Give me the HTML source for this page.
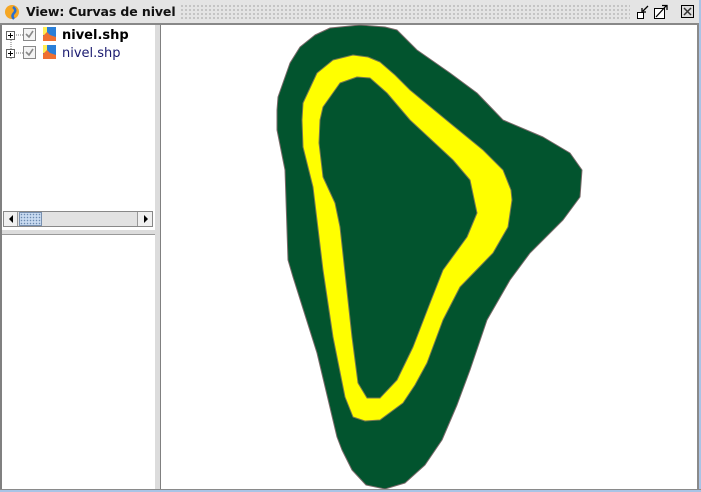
<!DOCTYPE html>
<html><head><meta charset="utf-8"><style>
*{margin:0;padding:0;box-sizing:border-box}
body{width:701px;height:492px;position:relative;overflow:hidden;background:#fff;font-family:"Liberation Sans","DejaVu Sans",sans-serif}
.abs{position:absolute}
</style></head><body>
<div class="abs" style="left:0;top:0;width:701px;height:22px;background-color:#e4e4e4;background-image:radial-gradient(#9a9a9a 0.6px,transparent 0.9px);background-size:4px 4px;"></div>
<div class="abs" style="left:0;top:0;width:701px;height:3px;background:#e4e4e4"></div>
<div class="abs" style="left:0;top:20px;width:701px;height:3px;background:#e4e4e4"></div>
<div class="abs" style="left:0;top:23px;width:701px;height:2px;background:#888"></div>
<div class="abs" style="left:0;top:2px;width:179px;height:20px;background:#e4e4e4"></div>
<svg class="abs" style="left:4px;top:4px" width="16" height="16"><circle cx="8" cy="8" r="7" fill="#f5a623"/><path d="M9 3 Q13 6 10 9 Q7 12 10 15" stroke="#2a6fd0" stroke-width="2.5" fill="none"/></svg>
<div class="abs" style="left:26px;top:4px;font-size:12.5px;font-weight:bold;color:#111;font-family:'DejaVu Sans',sans-serif;letter-spacing:-0.1px">View: Curvas de nivel</div>
<div class="abs" style="left:630px;top:2px;width:71px;height:20px;background:#e4e4e4"></div>
<svg class="abs" style="left:636px;top:4px" width="60" height="16">
<rect x="1.5" y="8.5" width="6" height="6" fill="#fff" stroke="#000"/><path d="M12 2 L7 7 M6 4 V8 H10" stroke="#000" fill="none" stroke-width="1.3"/>
<rect x="18.5" y="4.5" width="10" height="10" fill="#fff" stroke="#000"/><path d="M20 13 L30 2 M26 1.5 H31 V6" stroke="#000" fill="none" stroke-width="1.3"/>
<rect x="45.5" y="1.5" width="12" height="12" fill="#ddd" stroke="#000"/><path d="M48 4 L55 11 M55 4 L48 11" stroke="#333" stroke-width="1.5"/>
</svg>
<div class="abs" style="left:0;top:25px;width:2px;height:465px;background:#808080"></div>
<div class="abs" style="left:155px;top:25px;width:5px;height:465px;background:#dcdcdc"></div>
<div class="abs" style="left:160px;top:25px;width:1px;height:465px;background:#808080"></div>
<svg class="abs" style="left:4px;top:27px" width="60" height="36">
<path d="M7 9 V33 M12 8 H21 M12 26 H21" stroke="#777" stroke-dasharray="1 1" fill="none"/>
<rect x="2.5" y="4.5" width="8" height="8" fill="#fff" stroke="#666"/><path d="M4 8.5 H9 M6.5 6 V11" stroke="#000"/>
<rect x="2.5" y="22.5" width="8" height="8" fill="#fff" stroke="#666"/><path d="M4 26.5 H9 M6.5 24 V29" stroke="#000"/>
<rect x="19.5" y="1.5" width="12" height="12" fill="#f4f4f4" stroke="#888"/><path d="M22 7 L25 10 L29 4" stroke="#888" stroke-width="1.6" fill="none"/>
<rect x="19.5" y="19.5" width="12" height="12" fill="#f4f4f4" stroke="#888"/><path d="M22 25 L25 28 L29 22" stroke="#888" stroke-width="1.6" fill="none"/>
<rect x="39" y="0" width="13" height="14" fill="#2a7fd8"/><rect x="39" y="0" width="4" height="8" fill="#ffee55"/><path d="M39 14 V9 L43 5 L46 8 L52 10 V14Z" fill="#f07030"/>
<rect x="39" y="18" width="13" height="14" fill="#2a7fd8"/><rect x="39" y="18" width="4" height="8" fill="#ffee55"/><path d="M39 32 V27 L43 23 L46 26 L52 28 V32Z" fill="#f07030"/>
</svg>
<div class="abs" style="left:62px;top:28px;font-size:13px;font-weight:bold;color:#000;font-family:'DejaVu Sans',sans-serif">nivel.shp</div>
<div class="abs" style="left:62px;top:46px;font-size:13px;color:#1a1a70;font-family:'DejaVu Sans',sans-serif">nivel.shp</div>
<div class="abs" style="left:3px;top:211px;width:150px;height:16px;background:#e2e2e2;border:1px solid #888"></div>
<div class="abs" style="left:4px;top:212px;width:14px;height:14px;background:#f0f0f0;border-right:1px solid #999"></div>
<svg class="abs" style="left:7px;top:214px" width="8" height="10"><path d="M6 1 L2 5 L6 9Z" fill="#000"/></svg>
<div class="abs" style="left:19px;top:212px;width:23px;height:14px;background-color:#c8daf0;background-image:radial-gradient(#6a8ab0 0.6px,transparent 0.9px);background-size:3px 3px;border:1px solid #7890b0"></div>
<div class="abs" style="left:137px;top:212px;width:15px;height:14px;background:#f0f0f0;border-left:1px solid #999"></div>
<svg class="abs" style="left:142px;top:214px" width="8" height="10"><path d="M2 1 L6 5 L2 9Z" fill="#000"/></svg>
<div class="abs" style="left:2px;top:230px;width:153px;height:5px;background:#dcdcdc;border-bottom:1px solid #999"></div>
<div class="abs" style="left:697px;top:23px;width:2px;height:469px;background:#8a8a8a"></div>
<div class="abs" style="left:699px;top:0;width:2px;height:492px;background:#a9c4e6"></div>
<div class="abs" style="left:0;top:489px;width:701px;height:1px;background:#8a8a8a"></div>
<div class="abs" style="left:0;top:490px;width:701px;height:2px;background:#a9c4e6"></div>
<svg class="abs" style="left:0;top:0" width="697" height="489" stroke-linejoin="round">
<path fill="#02542e" stroke="#7a6a6a" stroke-width="1" d="M290,63 L300,47 L315,35 L330,28 L360,25 L385,27 L397,30 L407,40 L417,50 L450,73 L477,93 L503,120 L543,137 L570,153 L582,170 L580,197 L563,220 L530,253 L510,280 L487,320 L470,370 L457,405 L442,440 L425,465 L405,483 L385,489 L366,485 L352,470 L342,450 L337,437 L317,353 L293,277 L288,260 L285,170 L277,130 L277,110 L278,97 Z"/>
<path fill="#ffff00" stroke="#7a7a50" stroke-width="1" d="M333,60 L353,55 L368,57 L380,62 L395,75 L410,90 L450,123 L483,150 L503,170 L511,190 L512,200 L508,227 L493,253 L460,287 L443,320 L427,363 L415,385 L403,403 L380,420 L365,421 L353,417 L345,397 L333,337 L323,270 L313,187 L303,147 L302,120 L303,103 L317,73 Z"/>
<path fill="#02542e" stroke="#7a7a50" stroke-width="1" d="M340,83 L357,77 L370,78 L387,93 L410,120 L453,160 L470,180 L477,213 L467,237 L443,270 L430,303 L413,347 L397,380 L380,398 L367,398 L358,383 L352,337 L340,227 L335,203 L323,177 L319,143 L320,120 L323,107 Z"/>
</svg>
</body></html>
